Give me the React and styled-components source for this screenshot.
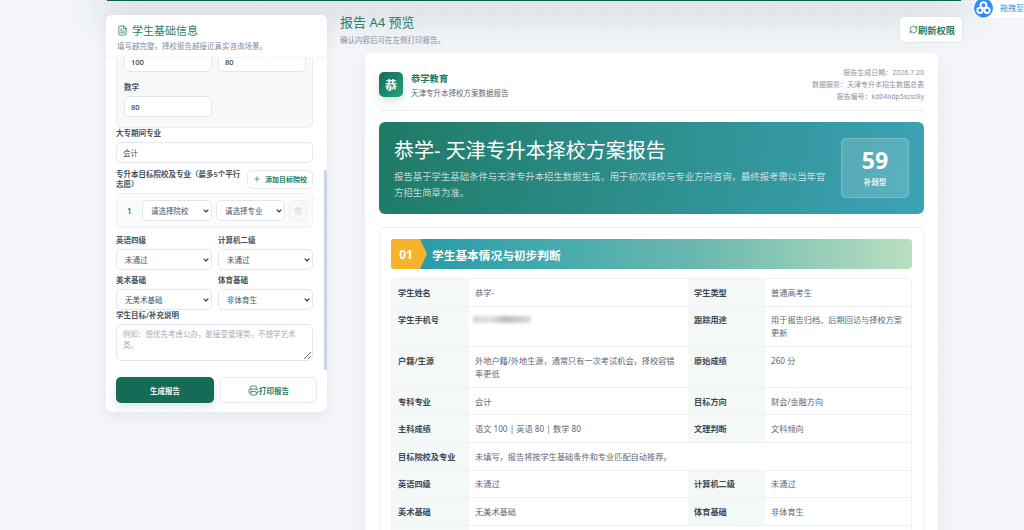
import React, { useLayoutEffect, useRef } from "react";
import styled, { createGlobalStyle } from "styled-components";
import { FileText, Plus, Trash2, Printer, RefreshCw } from "lucide-react";

const GlobalStyle = createGlobalStyle`
  html, body {
    margin: 0;
    height: 530px;
    overflow: hidden;
    background: #f4f6fa;
    font-family: "Noto Sans", "Noto Sans CJK SC", sans-serif;
  }
  * { box-sizing: border-box; }
`;

const rows = [
  [{ label: "学生姓名", value: "恭学-" }, { label: "学生类型", value: "普通高考生" }],
  [{ label: "学生手机号", blurred: true }, { label: "跟踪用途", value: "用于报告归档、后期回访与择校方案更新" }],
  [{ label: "户籍/生源", value: "外地户籍/外地生源，通常只有一次考试机会，择校容错率更低" }, { label: "原始成绩", value: "260 分" }],
  [{ label: "专科专业", value: "会计" }, { label: "目标方向", value: "财会/金融方向" }],
  [{ label: "主科成绩", value: "语文 100 | 英语 80 | 数学 80" }, { label: "文理判断", value: "文科倾向" }],
  [{ label: "目标院校及专业", value: "未填写，报告将按学生基础条件和专业匹配自动推荐。", wide: true }],
  [{ label: "英语四级", value: "未通过" }, { label: "计算机二级", value: "未通过" }],
  [{ label: "美术基础", value: "无美术基础" }, { label: "体育基础", value: "非体育生" }],
];

const App = () => {
  const scrollRef = useRef(null);

  // the form is shown scrolled down to its end
  useLayoutEffect(() => {
    scrollRef.current.scrollTop = scrollRef.current.scrollHeight;
  }, []);

  return (
    <Page>
      <GlobalStyle />
      <TopBar />
      <Widget>
        <svg width="20" height="20" viewBox="0 0 20 20">
          <circle cx="10" cy="10" r="10" fill="#2f8df5" />
          <circle cx="10" cy="7" r="3.1" fill="none" stroke="#fff" strokeWidth="2" />
          <circle cx="6.3" cy="12.4" r="2.8" fill="none" stroke="#fff" strokeWidth="2" />
          <circle cx="13.7" cy="12.4" r="2.8" fill="none" stroke="#fff" strokeWidth="2" />
        </svg>
        <span>拖拽至</span>
      </Widget>
      <Layout>
        <Sidebar>
          <SidebarHead>
            <SidebarTitle>
              <FileText size={11} strokeWidth={1.8} />
              学生基础信息
            </SidebarTitle>
            <SidebarHint>填写越完整，择校报告越接近真实咨询场景。</SidebarHint>
          </SidebarHead>
          <FormScroll ref={scrollRef}>
            <ScoreBox>
              <ScoreGrid>
                <ScoreInput aria-label="语文" defaultValue="100" />
                <ScoreInput aria-label="英语" defaultValue="80" />
                <Field>
                  <Label>数学</Label>
                  <ScoreInput defaultValue="80" />
                </Field>
              </ScoreGrid>
            </ScoreBox>
            <Field>
              <Label>大专期间专业</Label>
              <TextInput defaultValue="会计" />
            </Field>
            <TargetHead>
              <Label>专升本目标院校及专业（最多5个平行志愿）</Label>
              <AddButton>
                <Plus size={8} strokeWidth={2} />
                添加目标院校
              </AddButton>
            </TargetHead>
            <TargetBox>
              <TargetIndex>1</TargetIndex>
              <Select>
                <option>请选择院校</option>
              </Select>
              <Select>
                <option>请选择专业</option>
              </Select>
              <TrashButton>
                <Trash2 size={8} strokeWidth={1.6} />
              </TrashButton>
            </TargetBox>
            <TwoColumns>
              <Field>
                <Label>英语四级</Label>
                <Select>
                  <option>未通过</option>
                </Select>
              </Field>
              <Field>
                <Label>计算机二级</Label>
                <Select>
                  <option>未通过</option>
                </Select>
              </Field>
              <Field>
                <Label>美术基础</Label>
                <Select>
                  <option>无美术基础</option>
                </Select>
              </Field>
              <Field>
                <Label>体育基础</Label>
                <Select>
                  <option>非体育生</option>
                </Select>
              </Field>
            </TwoColumns>
            <Field>
              <Label>学生目标/补充说明</Label>
              <NoteInput placeholder="例如：想优先考虑公办，能接受管理类，不想学艺术类。" />
            </Field>
          </FormScroll>
          <ScrollThumb />
          <SidebarFoot>
            <PrimaryButton>生成报告</PrimaryButton>
            <GhostButton>
              <Printer size={11} strokeWidth={1.8} />
              打印报告
            </GhostButton>
          </SidebarFoot>
        </Sidebar>

        <Preview>
          <PreviewHead>
            <div>
              <PreviewTitle>报告 A4 预览</PreviewTitle>
              <PreviewHint>确认内容后可在左侧打印报告。</PreviewHint>
            </div>
            <RefreshButton>
              <RefreshCw size={9} strokeWidth={2} />
              刷新权限
            </RefreshButton>
          </PreviewHead>
          <Paper>
            <PaperHead>
              <Brand>
                <BrandMark>恭</BrandMark>
                <div>
                  <BrandName>恭学教育</BrandName>
                  <BrandSub>天津专升本择校方案数据报告</BrandSub>
                </div>
              </Brand>
              <PaperMeta>
                <div>报告生成日期：2026.7.20</div>
                <div>数据服务：天津专升本招生数据总表</div>
                <div>报告编号：kd04iidp5scst8y</div>
              </PaperMeta>
            </PaperHead>
            <Banner>
              <BannerText>
                <BannerTitle>恭学- 天津专升本择校方案报告</BannerTitle>
                <BannerDesc>
                  报告基于学生基础条件与天津专升本招生数据生成，用于初次择校与专业方向咨询，最终报考需以当年官方招生简章为准。
                </BannerDesc>
              </BannerText>
              <ScoreCard>
                <ScoreValue>59</ScoreValue>
                <ScoreTag>补弱型</ScoreTag>
              </ScoreCard>
            </Banner>
            <Section>
              <SectionBar>
                <SectionNo>01</SectionNo>
                <SectionName>学生基本情况与初步判断</SectionName>
              </SectionBar>
              <InfoTable>
                {rows.flatMap((row, i) =>
                  row.flatMap((cell) => [
                    <CellLabel key={`${i}-${cell.label}-l`}>{cell.label}</CellLabel>,
                    <CellValue key={`${i}-${cell.label}-v`} $wide={cell.wide}>
                      {cell.blurred ? <BlurredPhone /> : cell.value}
                    </CellValue>,
                  ])
                )}
                <TableTail />
              </InfoTable>
            </Section>
          </Paper>
        </Preview>
      </Layout>
    </Page>
  );
};

export default App;

const Page = styled.div`
  position: relative;
  width: 1024px;
  height: 530px;
  overflow: hidden;
  background-color: #f4f6fa;
  background-image:
    linear-gradient(rgba(225, 230, 236, 0.2) 1px, transparent 1px),
    linear-gradient(90deg, rgba(225, 230, 236, 0.2) 1px, transparent 1px);
  background-size: 23.3px 23.3px;
`;

const TopBar = styled.div`
  width: 854px;
  height: 1px;
  margin-left: 107px;
  background: #0f5f4d;
  box-shadow: 0 6px 36px 8px rgba(40, 70, 70, 0.24);
`;

const Widget = styled.div`
  position: absolute;
  top: -3px;
  right: 0;
  display: flex;
  align-items: center;
  gap: 7px;
  width: 51px;
  height: 21px;
  padding-left: 1px;
  background: #fff;
  border-radius: 11px 0 0 11px;
  font-size: 8px;
  color: #2f8df5;
  white-space: nowrap;
`;

const Layout = styled.div`
  position: relative;
  display: flex;
  align-items: flex-start;
  gap: 13px;
  padding: 14px 61px 0 106px;
`;

const Sidebar = styled.aside`
  position: relative;
  flex: none;
  display: flex;
  flex-direction: column;
  width: 221px;
  height: 397px;
  background: #fff;
  border-radius: 6px;
  box-shadow: 0 4px 14px rgba(30, 60, 90, 0.08);
  overflow: hidden;
`;

const SidebarHead = styled.div`
  position: relative;
  z-index: 1;
  flex: none;
  height: 43px;
  padding: 8px 11px 0;
  background: #fff;
  border-bottom: 1px solid #f2f4f7;
`;

const SidebarTitle = styled.div`
  display: flex;
  align-items: center;
  gap: 4px;
  font-size: 11px;
  line-height: 15px;
  color: #2b8069;
`;

const SidebarHint = styled.div`
  margin-top: 3px;
  font-size: 7.5px;
  line-height: 11px;
  color: #858e9c;
`;

const FormScroll = styled.div`
  flex: 1;
  min-height: 0;
  display: flex;
  flex-direction: column;
  padding: 0 14px 10px 10px;
  overflow: hidden;
`;

const ScrollThumb = styled.div`
  position: absolute;
  top: 155px;
  right: 0;
  width: 3px;
  height: 200px;
  background: #cbd5e1;
`;

const Field = styled.label`
  display: flex;
  flex-direction: column;
  gap: 4px;
  min-width: 0;
`;

const Label = styled.span`
  font-size: 7.5px;
  line-height: 10px;
  font-weight: 600;
  color: #4a5360;
`;

const controlBase = `
  width: 100%;
  height: 21px;
  background: #fff;
  border: 1px solid #e3e8ef;
  border-radius: 5px;
  font-family: inherit;
  font-size: 7.5px;
  color: #4a5360;
  outline: none;
`;

const TextInput = styled.input`
  ${controlBase}
  padding: 0 6px;
`;

const ScoreBox = styled.div`
  flex: none;
  padding: 8px 7px 10px;
  background: #f7f9f9;
  border: 1px solid #e8edf2;
  border-radius: 5px;
`;

const ScoreGrid = styled.div`
  display: grid;
  grid-template-columns: 88px 88px;
  gap: 10px 6px;
`;

const ScoreInput = styled.input`
  ${controlBase}
  padding: 0 6px;
  font-weight: 500;
  color: #333b47;
`;

const TargetHead = styled.div`
  flex: none;
  display: flex;
  align-items: center;
  justify-content: space-between;
  gap: 4px;
  margin-top: 6px;

  ${Label} {
    width: 129px;
  }
`;

const AddButton = styled.button`
  flex: none;
  display: flex;
  align-items: center;
  justify-content: center;
  gap: 4px;
  width: 66px;
  height: 19px;
  padding: 0;
  background: #fff;
  border: 1px solid #e3ece9;
  border-radius: 5px;
  font-family: inherit;
  font-size: 7px;
  font-weight: 600;
  color: #2b8069;
`;

const TargetBox = styled.div`
  flex: none;
  display: grid;
  grid-template-columns: 11px 70px 69px 18px;
  align-items: center;
  gap: 4px;
  height: 35px;
  margin-top: 4px;
  padding: 0 0 0 10px;
  background: #f9fbfc;
  border: 1px solid #edf1f5;
  border-radius: 5px;
`;

const TargetIndex = styled.span`
  font-size: 8px;
  font-weight: 600;
  color: #1f7a66;
`;

const Select = styled.select`
  ${controlBase}
  padding: 0 9px 0 8px;
  appearance: none;
  background-image: url("data:image/svg+xml,%3Csvg xmlns='http://www.w3.org/2000/svg' width='6' height='4' viewBox='0 0 6 4'%3E%3Cpath d='M.7.7 3 3l2.3-2.3' fill='none' stroke='%23333' stroke-width='1.2'/%3E%3C/svg%3E");
  background-repeat: no-repeat;
  background-position: right 2px center;
`;

const TrashButton = styled.button`
  display: flex;
  align-items: center;
  justify-content: center;
  width: 18px;
  height: 21px;
  padding: 0;
  background: #f6f8f9;
  border: 1px solid #edf1f5;
  border-radius: 5px;
  color: #c0c7d0;
`;

const TwoColumns = styled.div`
  flex: none;
  display: grid;
  grid-template-columns: 96px 95px;
  gap: 5px 6px;
  margin-top: 7px;
`;

const NoteInput = styled.textarea`
  ${controlBase}
  flex: none;
  height: 37px;
  padding: 4px 6px;
  line-height: 11px;
  resize: vertical;

  &::placeholder {
    color: #a6adb8;
  }
`;

const SidebarFoot = styled.div`
  flex: none;
  display: flex;
  gap: 6px;
  height: 41px;
  padding: 6px 10px 0;
`;

const PrimaryButton = styled.button`
  flex: none;
  width: 98px;
  height: 26px;
  padding: 0;
  background: #166b57;
  border: none;
  border-radius: 5px;
  box-shadow: 0 4px 10px rgba(22, 107, 87, 0.16);
  font-family: inherit;
  font-size: 7.5px;
  font-weight: 600;
  color: #f2f7f5;
`;

const GhostButton = styled.button`
  flex: none;
  display: flex;
  align-items: center;
  justify-content: center;
  width: 97px;
  height: 26px;
  padding: 0;
  background: #fff;
  border: 1px solid #e5ebee;
  border-radius: 5px;
  font-family: inherit;
  font-size: 7.5px;
  font-weight: 600;
  color: #2b8069;
`;

const Preview = styled.main`
  flex: 1;
  min-width: 0;
`;

const PreviewHead = styled.div`
  display: flex;
  align-items: flex-start;
  justify-content: space-between;
  height: 38px;
`;

const PreviewTitle = styled.h2`
  margin: 0;
  font-size: 13px;
  line-height: 14px;
  font-weight: 400;
  color: #2b8069;
`;

const PreviewHint = styled.div`
  margin-top: 6px;
  font-size: 7.5px;
  line-height: 11px;
  color: #858e9c;
`;

const RefreshButton = styled.button`
  display: flex;
  align-items: center;
  justify-content: center;
  width: 64px;
  height: 27px;
  margin-top: 1px;
  padding: 0 0 0 2px;
  background: #fff;
  border: 1px solid #dfe7e7;
  border-radius: 5px;
  font-family: inherit;
  font-size: 9.3px;
  font-weight: 600;
  color: #2b8069;
`;

const Paper = styled.div`
  width: 573px;
  height: 500px;
  margin-left: 25px;
  padding: 0 14px;
  background: #fff;
  border-radius: 5px 5px 0 0;
  box-shadow: 0 6px 20px rgba(40, 60, 110, 0.07);
`;

const PaperHead = styled.div`
  display: flex;
  justify-content: space-between;
  height: 58px;
  padding-top: 13px;
  border-bottom: 1px solid #e9edf3;
`;

const Brand = styled.div`
  display: flex;
  gap: 8px;
`;

const BrandMark = styled.div`
  display: flex;
  align-items: center;
  justify-content: center;
  width: 24px;
  height: 25px;
  margin-top: 6px;
  background: linear-gradient(135deg, #166b57, #22a37f);
  border-radius: 5px;
  box-shadow: 0 4px 10px rgba(22, 107, 87, 0.18);
  font-size: 12px;
  font-weight: 700;
  color: #fff;
`;

const BrandName = styled.div`
  margin-top: 7px;
  font-size: 9.3px;
  line-height: 12px;
  font-weight: 600;
  color: #1f7a66;
`;

const BrandSub = styled.div`
  margin-top: 3px;
  font-size: 7.5px;
  line-height: 11px;
  color: #5d6776;
`;

const PaperMeta = styled.div`
  margin-top: 1px;
  font-size: 7px;
  line-height: 12px;
  text-align: right;
  color: #8a93a1;
`;

const Banner = styled.div`
  display: flex;
  align-items: center;
  justify-content: space-between;
  height: 92px;
  margin-top: 11px;
  padding: 0 15px;
  background: linear-gradient(100deg, #1f7a66, #3ca3b6);
  border-radius: 6px;
`;

const BannerText = styled.div`
  width: 436px;
  padding-top: 3px;
`;

const BannerTitle = styled.h1`
  margin: 0 0 5px;
  font-size: 20px;
  line-height: 26px;
  font-weight: 400;
  color: #fff;
`;

const BannerDesc = styled.p`
  margin: 0;
  font-size: 9.4px;
  line-height: 16px;
  color: rgba(255, 255, 255, 0.72);
`;

const ScoreCard = styled.div`
  display: flex;
  flex-direction: column;
  align-items: center;
  width: 68px;
  height: 60px;
  padding-top: 8px;
  background: rgba(255, 255, 255, 0.16);
  border: 1px solid rgba(255, 255, 255, 0.18);
  border-radius: 5px;
`;

const ScoreValue = styled.div`
  font-size: 23px;
  line-height: 26px;
  font-weight: 700;
  color: #fff;
`;

const ScoreTag = styled.div`
  margin-top: 4px;
  font-size: 7.5px;
  line-height: 10px;
  font-weight: 600;
  color: rgba(255, 255, 255, 0.85);
`;

const Section = styled.section`
  margin-top: 13px;
  padding: 11px 11px 0;
  border: 1px solid #edf0f6;
  border-radius: 5px;
`;

const SectionBar = styled.div`
  display: flex;
  align-items: center;
  height: 30px;
  background: linear-gradient(90deg, #1f9aa8, #6cb9b0 60%, #b9dfc0);
  border-radius: 4px;
`;

const SectionNo = styled.div`
  display: flex;
  align-items: center;
  justify-content: center;
  width: 36px;
  height: 30px;
  padding-right: 6px;
  background: #f7b32b;
  border-radius: 4px 0 0 4px;
  clip-path: polygon(0 0, 29px 0, 36px 50%, 29px 100%, 0 100%);
  font-size: 12px;
  font-weight: 700;
  color: #fff;
`;

const SectionName = styled.div`
  margin-left: 5px;
  font-size: 11.7px;
  font-weight: 600;
  color: #fff;
`;

const InfoTable = styled.div`
  display: grid;
  grid-template-columns: 77px 219px 77px 1fr;
  margin-top: 9px;
  border: 1px solid #edf0f4;
  border-bottom: none;
  border-radius: 5px 5px 0 0;
  overflow: hidden;
`;

const CellLabel = styled.div`
  padding: 6.8px 6px;
  background: #f4f8f7;
  border-bottom: 1px solid #edf0f4;
  font-size: 8.2px;
  line-height: 13px;
  font-weight: 600;
  color: #3f4856;
`;

const CellValue = styled.div`
  ${({ $wide }) => $wide && "grid-column: span 3;"}
  padding: 6.8px 6px;
  border-bottom: 1px solid #edf0f4;
  font-size: 8.2px;
  line-height: 13px;
  color: #5d6776;
`;

const TableTail = styled.div`
  grid-column: 1;
  height: 20px;
  background: #f4f8f7;
`;

const BlurredPhone = styled.div`
  width: 58px;
  height: 7px;
  margin: 3px 0 0 -2px;
  background: linear-gradient(90deg, #d3d5da, #dfe1e4 30%, #b9bcc3 55%, #dcdee2);
  filter: blur(1.6px);
`;
